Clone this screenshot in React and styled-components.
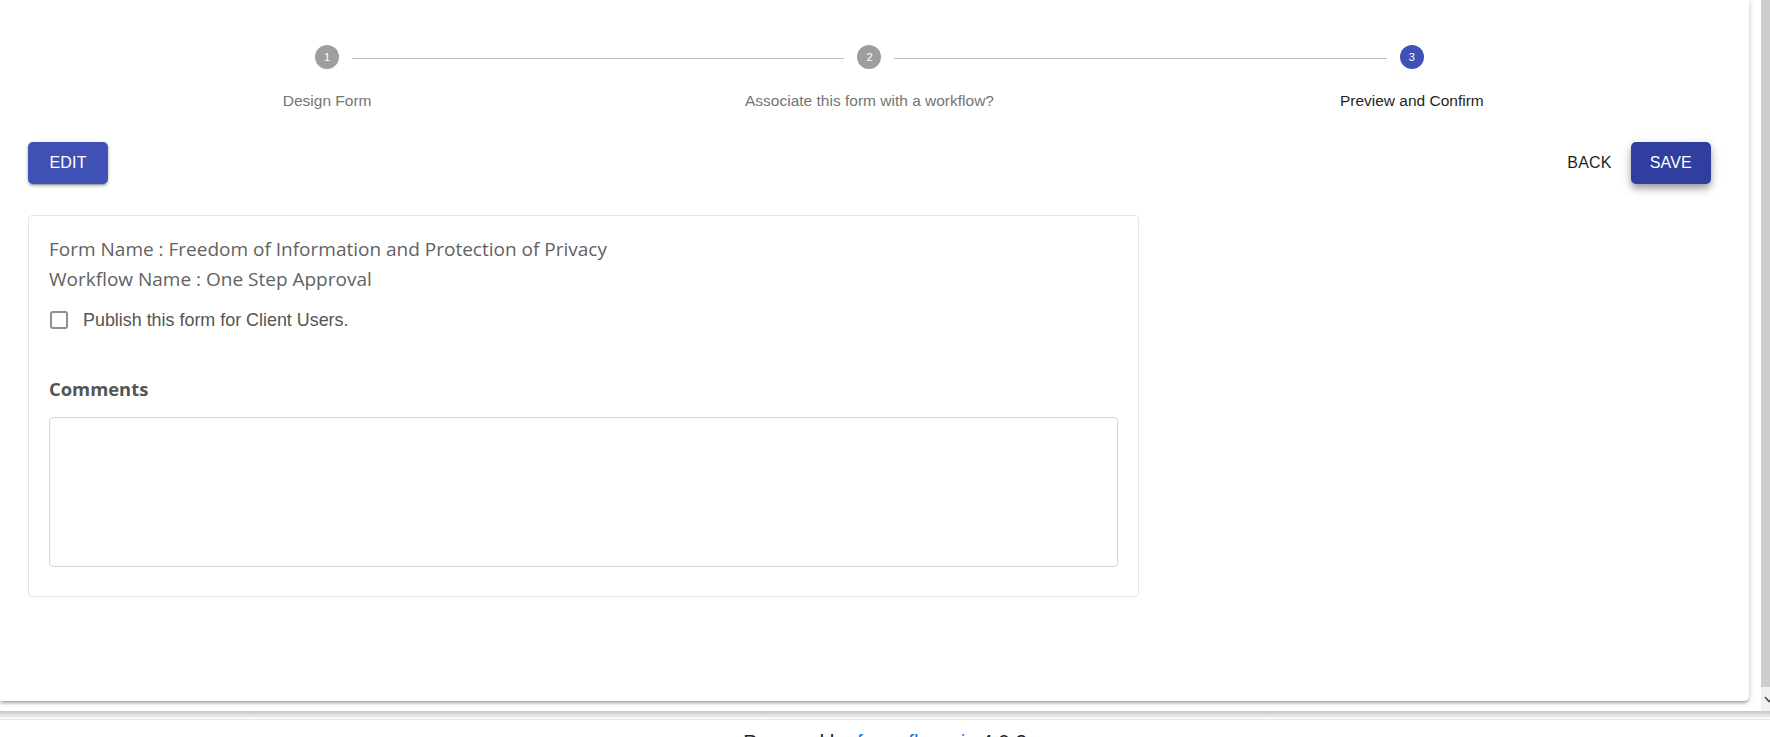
import React from "react";
import styled, { createGlobalStyle } from "styled-components";

const GlobalStyle = createGlobalStyle`
  html, body { margin: 0; padding: 0; background: #ffffff; overflow: hidden; }
  * { box-sizing: border-box; }
`;

const Page = styled.div`
  display: flex;
  flex-direction: column;
  width: 1770px;
  height: 737px;
  overflow: hidden;
  font-family: "Liberation Sans", Arial, sans-serif;
`;

const Viewport = styled.div`
  display: flex;
  height: 711px;
  flex: none;
`;

const ScrollContent = styled.div`
  flex: 1;
  padding: 0 12px 10px 0;
  background: #ffffff;
`;

const Panel = styled.div`
  height: 701px;
  background: #ffffff;
  border-radius: 0 0 5px 0;
  box-shadow: 0 3px 3px -1px rgba(0, 0, 0, 0.22), 0 2px 4px 0 rgba(0, 0, 0, 0.1),
    1px 1px 6px 0 rgba(0, 0, 0, 0.1);
  padding: 45px 38px 0 28px;
`;

const Stepper = styled.div`
  display: grid;
  grid-template-columns: repeat(3, 1fr);
  margin: 0 28px;
`;

const Step = styled.div`
  display: flex;
  flex-direction: column;
  align-items: stretch;
`;

const IconRow = styled.div`
  display: grid;
  grid-template-columns: 1fr auto 1fr;
  column-gap: 13px;
`;

const Segment = styled.div`
  height: 1px;
  margin-top: 13px;
  background: ${(p) => (p.$visible ? "#bdbdbd" : "transparent")};
`;

const StepIcon = styled.div`
  width: 24px;
  height: 24px;
  border-radius: 50%;
  background: ${(p) => (p.$active ? "#3f51b5" : "#9e9e9e")};
  color: #ffffff;
  font-size: 11px;
  display: flex;
  align-items: center;
  justify-content: center;
  line-height: 1;
`;

const StepLabel = styled.div`
  margin-top: 22px;
  text-align: center;
  font-size: 15.5px;
  line-height: 20px;
  color: ${(p) => (p.$active ? "#1f1f1f" : "#757575")};
`;

const ActionBar = styled.div`
  display: flex;
  align-items: center;
  justify-content: space-between;
  margin-top: 31px;
  height: 42px;
`;

const ButtonGroup = styled.div`
  display: flex;
  align-items: center;
  gap: 9px;
`;

const Button = styled.button`
  height: 42px;
  border: none;
  border-radius: 5px;
  padding: 0 ${(p) => (p.$variant === "text" ? "10px" : "19px")};
  min-width: ${(p) => (p.$variant === "text" ? "0" : "80px")};
  font-family: "Liberation Sans", Arial, sans-serif;
  font-size: 16px;
  letter-spacing: 0.2px;
  text-transform: uppercase;
  cursor: pointer;
  background: ${(p) =>
    p.$variant === "text" ? "transparent" : p.$variant === "dark" ? "#303f9f" : "#3f51b5"};
  color: ${(p) => (p.$variant === "text" ? "#1f1f1f" : "#ffffff")};
  box-shadow: ${(p) =>
    p.$variant === "text"
      ? "none"
      : p.$variant === "dark"
      ? "0 4px 6px -1px rgba(0,0,0,0.25), 0 6px 10px 0 rgba(0,0,0,0.14), 0 2px 14px 0 rgba(0,0,0,0.1)"
      : "0 3px 1px -2px rgba(0,0,0,0.2), 0 2px 3px 0 rgba(0,0,0,0.2), 0 1px 5px 0 rgba(0,0,0,0.12)"};
`;

const Card = styled.div`
  margin-top: 31px;
  width: 1111px;
  border: 1px solid #e6e6e6;
  border-radius: 4px;
  padding: 18px 20px 29px 20px;
  display: flex;
  flex-direction: column;
`;

const InfoLine = styled.div`
  font-family: "Open Sans", Lato, sans-serif;
  font-size: 19px;
  line-height: 30px;
  color: #626262;
`;

const CheckRow = styled.label`
  display: flex;
  align-items: center;
  gap: 15px;
  height: 30px;
  margin-top: 11px;
  margin-left: 1px;
`;

const CheckBox = styled.span`
  width: 18px;
  height: 18px;
  border: 2px solid #8e8e8e;
  border-radius: 3px;
  background: #ffffff;
  flex: none;
`;

const CheckLabel = styled.span`
  font-size: 17.9px;
  color: #555555;
`;

const SectionTitle = styled.div`
  margin-top: 41px;
  font-family: "Open Sans", Lato, sans-serif;
  font-weight: 700;
  font-size: 18.4px;
  line-height: 26px;
  color: #555555;
`;

const CommentBox = styled.textarea`
  margin-top: 15px;
  height: 150px;
  width: 100%;
  border: 1px solid #d4d4d4;
  border-radius: 4px;
  resize: none;
  font-family: inherit;
  outline: none;
`;

const ScrollRail = styled.div`
  width: 9px;
  flex: none;
  display: flex;
  flex-direction: column;
  background: #f1f1f1;
`;

const Thumb = styled.div`
  flex: 1;
  background: #cdcdcd;
`;

const RailButton = styled.div`
  height: 24px;
  display: flex;
  align-items: flex-start;
  padding-top: 9px;
  overflow: hidden;
`;

const Footer = styled.footer`
  flex: 1;
  background: linear-gradient(
    to bottom,
    #c6c6c6 0px,
    #e8e8e8 5px,
    #f7f7f7 7px,
    #ffffff 7px,
    #ffffff 8px,
    #e6e6ee 8px,
    #e6e6ee 9px,
    #ffffff 9px
  );
  display: flex;
  justify-content: center;
  padding-top: 19px;
  font-size: 20.5px;
  line-height: 23px;
  color: #212529;
`;

const FooterLink = styled.span`
  color: #1a73e8;
`;

const steps = [
  { n: 1, label: "Design Form" },
  { n: 2, label: "Associate this form with a workflow?" },
  { n: 3, label: "Preview and Confirm", active: true },
];

export default function App() {
  return (
    <>
      <GlobalStyle />
      <Page>
        <Viewport>
          <ScrollContent>
            <Panel>
              <Stepper>
                {steps.map((s, i) => (
                  <Step key={s.n}>
                    <IconRow>
                      <Segment $visible={i > 0} />
                      <StepIcon $active={s.active}>{s.n}</StepIcon>
                      <Segment $visible={i < steps.length - 1} />
                    </IconRow>
                    <StepLabel $active={s.active}>{s.label}</StepLabel>
                  </Step>
                ))}
              </Stepper>
              <ActionBar>
                <Button $variant="primary">Edit</Button>
                <ButtonGroup>
                  <Button $variant="text">Back</Button>
                  <Button $variant="dark">Save</Button>
                </ButtonGroup>
              </ActionBar>
              <Card>
                <InfoLine>Form Name : Freedom of Information and Protection of Privacy</InfoLine>
                <InfoLine>Workflow Name : One Step Approval</InfoLine>
                <CheckRow>
                  <CheckBox />
                  <CheckLabel>Publish this form for Client Users.</CheckLabel>
                </CheckRow>
                <SectionTitle>Comments</SectionTitle>
                <CommentBox />
              </Card>
            </Panel>
          </ScrollContent>
          <ScrollRail>
            <Thumb />
            <RailButton>
              <svg width="9" height="8" viewBox="0 0 9 8">
                <path d="M4 1 L8 5.5 L12 1" fill="none" stroke="#4a4a4a" strokeWidth="1.6" />
              </svg>
            </RailButton>
          </ScrollRail>
        </Viewport>
        <Footer>
          <span>
            Powered by <FooterLink>formsflow.ai</FooterLink> v4.0.2
          </span>
        </Footer>
      </Page>
    </>
  );
}
